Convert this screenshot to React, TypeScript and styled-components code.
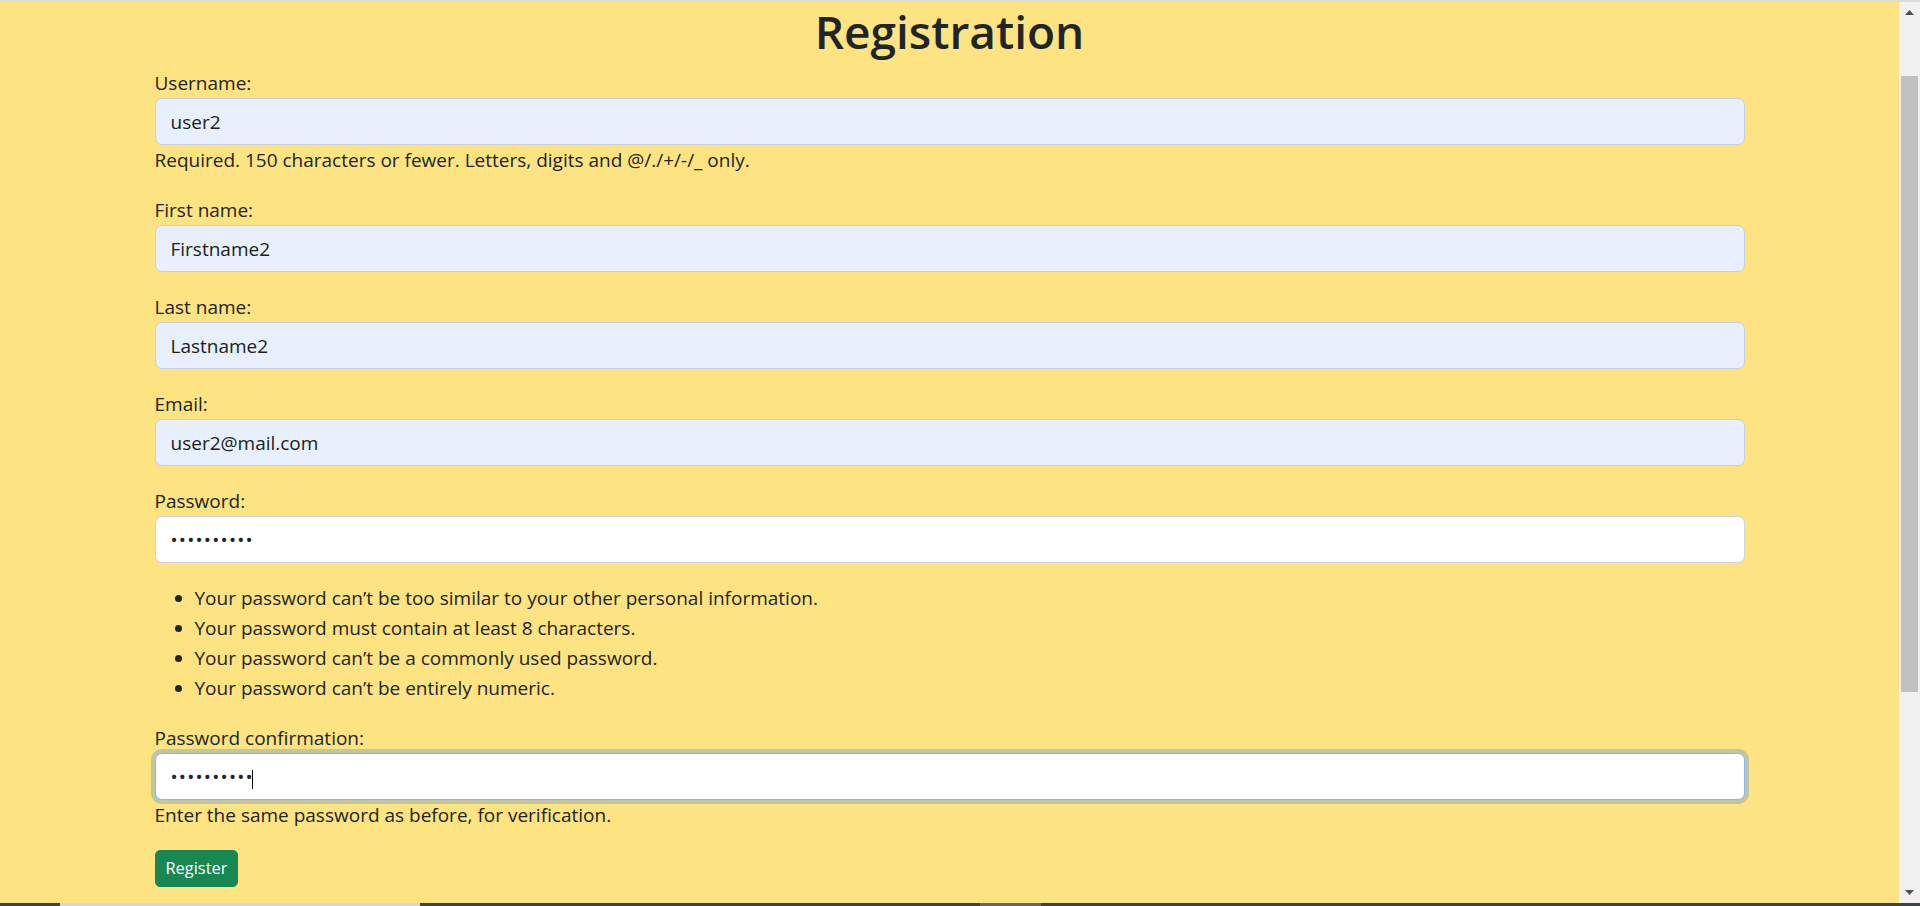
import React from "react";
import styled, { createGlobalStyle, css } from "styled-components";

const GlobalStyle = createGlobalStyle`
  *, *::before, *::after { box-sizing: border-box; }
  html, body { margin: 0; padding: 0; height: 100%; overflow: hidden; }
  body {
    font-family: "Open Sans", "Noto Sans", sans-serif;
    font-size: 19px;
    line-height: 30px;
    color: #212529;
    background: #fde381;
  }
  #root { height: 100%; }
`;

const Frame = styled.div`
  display: flex;
  flex-direction: column;
  height: 100vh;
`;

const TopEdge = styled.div`
  height: 2px;
  flex: 0 0 2px;
  background: #dcdcdc;
`;

const Viewport = styled.div`
  flex: 1;
  display: flex;
  min-height: 0;
`;

const Content = styled.main`
  flex: 1;
  background: #fde381;
`;

const Container = styled.div`
  max-width: 1590px;
  margin: 0 auto;
`;

const Title = styled.h1`
  margin: -2px 0 5px;
  font-size: 46px;
  line-height: 63px;
  font-weight: 600;
  text-align: center;
  color: #212529;
`;

const Field = styled.div`
  margin: 0 0 20px;
`;

const Label = styled.label`
  display: block;
  font-size: 19px;
  line-height: 30px;
`;

const InputWrap = styled.div`
  position: relative;
`;

const Input = styled.input<{ $autofill?: boolean; $focused?: boolean; $secret?: boolean }>`
  display: block;
  width: 100%;
  height: 47px;
  padding: 0 15px;
  font-family: "Open Sans", "Noto Sans", sans-serif;
  font-size: 19px;
  color: #212529;
  background: #ffffff;
  border: 1px solid #ced4da;
  border-radius: 7px;
  outline: none;
  caret-color: #000;
  ${(p) =>
    p.$autofill &&
    css`
      background: #e8f0fe;
      border-color: #c6cfdf;
      color: #1b1d20;
    `}
  ${(p) =>
    p.$secret &&
    css`
      letter-spacing: 1.2px;
    `}
  ${(p) =>
    p.$focused &&
    css`
      border-color: #86b7fe;
      box-shadow: 0 0 0 4px rgba(13, 110, 253, 0.25);
    `}
  &:focus {
    border-color: #86b7fe;
    box-shadow: 0 0 0 4px rgba(13, 110, 253, 0.25);
  }
`;

const Caret = styled.span`
  position: absolute;
  left: 97px;
  top: 17px;
  width: 1px;
  height: 19px;
  background: #000;
  pointer-events: none;
`;

const HelpText = styled.div`
  font-size: 19px;
  line-height: 30px;
`;

const Rules = styled.ul`
  margin: 20px 0 0;
  padding-left: 40px;
`;

const Rule = styled.li`
  font-size: 19px;
  line-height: 30px;
`;

const SubmitButton = styled.button`
  display: inline-flex;
  align-items: center;
  height: 37px;
  padding: 0 10px;
  border: 1px solid #198754;
  background: #198754;
  color: #ffffff;
  font-family: "Open Sans", "Noto Sans", sans-serif;
  font-size: 16.4px;
  line-height: 1;
  border-radius: 5px;
  cursor: pointer;
`;

const Scrollbar = styled.div`
  width: 21px;
  flex: 0 0 21px;
  background: #f1f1f1;
  display: flex;
  flex-direction: column;
`;

const ArrowButton = styled.div`
  height: 21px;
  flex: 0 0 21px;
  display: flex;
  align-items: center;
  justify-content: center;
`;

const Track = styled.div`
  flex: 1;
  padding: 53px 2px 0;
`;

const Thumb = styled.div`
  height: 616px;
  background: #c1c1c1;
`;

const BottomEdge = styled.div`
  height: 3px;
  flex: 0 0 3px;
  display: flex;
  background: #36474a;
`;

const EdgeSegment = styled.div<{ $w: number; $c: string }>`
  width: ${(p) => p.$w}px;
  flex: 0 0 ${(p) => p.$w}px;
  background: ${(p) => p.$c};
`;

const Arrow = ({ up }: { up?: boolean }) => (
  <svg width="9" height="5" viewBox="0 0 9 5">
    <polygon points={up ? "0,5 4.5,0 9,5" : "0,0 4.5,5 9,0"} fill="#505050" />
  </svg>
);

const rules = [
  "Your password can’t be too similar to your other personal information.",
  "Your password must contain at least 8 characters.",
  "Your password can’t be a commonly used password.",
  "Your password can’t be entirely numeric.",
];

export default function App() {
  return (
    <>
      <GlobalStyle />
      <Frame>
        <TopEdge />
        <Viewport>
          <Content>
            <Container>
              <Title>Registration</Title>
              <form onSubmit={(e) => e.preventDefault()}>
                <Field>
                  <Label htmlFor="id_username">Username:</Label>
                  <Input id="id_username" $autofill defaultValue="user2" />
                  <HelpText>Required. 150 characters or fewer. Letters, digits and @/./+/-/_ only.</HelpText>
                </Field>
                <Field>
                  <Label htmlFor="id_first_name">First name:</Label>
                  <Input id="id_first_name" $autofill defaultValue="Firstname2" />
                </Field>
                <Field>
                  <Label htmlFor="id_last_name">Last name:</Label>
                  <Input id="id_last_name" $autofill defaultValue="Lastname2" />
                </Field>
                <Field>
                  <Label htmlFor="id_email">Email:</Label>
                  <Input id="id_email" $autofill defaultValue="user2@mail.com" />
                </Field>
                <Field>
                  <Label htmlFor="id_password1">Password:</Label>
                  <Input id="id_password1" type="password" $secret defaultValue="user2pass1" />
                  <Rules>
                    {rules.map((r) => (
                      <Rule key={r}>{r}</Rule>
                    ))}
                  </Rules>
                </Field>
                <Field>
                  <Label htmlFor="id_password2">Password confirmation:</Label>
                  <InputWrap>
                    <Input id="id_password2" type="password" $secret $focused defaultValue="user2pass1" />
                    <Caret />
                  </InputWrap>
                  <HelpText>Enter the same password as before, for verification.</HelpText>
                </Field>
                <SubmitButton type="submit">Register</SubmitButton>
              </form>
            </Container>
          </Content>
          <Scrollbar>
            <ArrowButton>
              <Arrow up />
            </ArrowButton>
            <Track>
              <Thumb />
            </Track>
            <ArrowButton>
              <Arrow />
            </ArrowButton>
          </Scrollbar>
        </Viewport>
        <BottomEdge>
          <EdgeSegment $w={60} $c="#36474a" />
          <EdgeSegment $w={360} $c="#d5d7d7" />
          <EdgeSegment $w={560} $c="#36474a" />
          <EdgeSegment $w={61} $c="#5c6a6b" />
        </BottomEdge>
      </Frame>
    </>
  );
}
